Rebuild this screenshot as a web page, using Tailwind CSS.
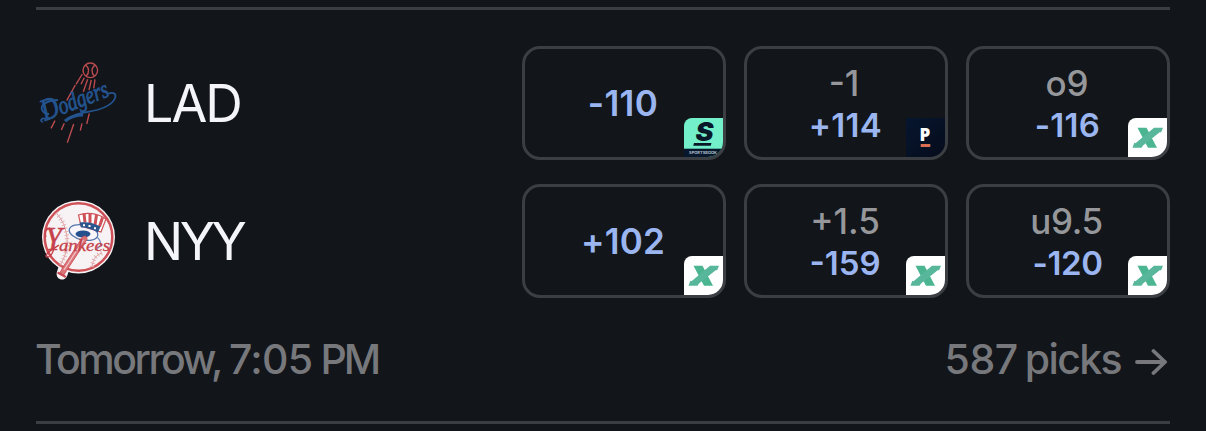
<!DOCTYPE html>
<html lang="en">
<head>
  <meta charset="UTF-8" />
  <title>LAD @ NYY</title>
  <script src="https://cdn.jsdelivr.net/npm/@tailwindcss/browser@4"></script>
</head>
<body class="h-screen overflow-hidden bg-[#12151a] font-['Inter',sans-serif]">

<!-- shared sportsbook logo -->
<svg class="hidden">
  <symbol id="book-x" viewBox="0 0 39 39">
    <rect width="39" height="39" fill="#fff" />
    <path d="M9.500 9.700h9l10.500 20h-9z" fill="#4bb592" />
    <path d="M26 9.700h9l-2 4.800-1-.5-17 13.500-1.500 2.200H4.500l1.800-5 1.200.5z" fill="#58b69b" />
  </symbol>
</svg>

<div class="mx-9 mt-[7px] h-[417px] border-y-3 border-[#3b3e42] flex flex-col">

  <div class="mt-9 flex flex-col gap-6">

    <div class="flex items-center h-[114px]">
      <svg class="w-[84px] h-[84px] shrink-0 overflow-visible" viewBox="0 0 84 84" fill="none">
        <g stroke="#b94b4e" stroke-width="1.400">
          <circle cx="54.300" cy="9.300" r="7.300" />
          <path d="M49.300 4.100c4 2 4.300 7.500 1 11M59.300 4.100c-4 2-4.300 7.500-1 11" />
          <path d="M46.300 13l-6.300 10.300M39.300 24l-8.600 15.700M48.300 16.700l-3.300 6.600M51.700 18.300l-4.400 12.400M55.300 19l-2.300 10M59 18.300l-1.300 9M19 59.700l-4 7.600M28.300 62.300l-3 6.700M37.700 63l-6.400 18.700M46 62.300l-1.700 7.400M53.300 52.300l-2.600 10.700" />
        </g>
        <text x="9" y="60" transform="rotate(-21 9 60)" textLength="70" lengthAdjust="spacingAndGlyphs" fill="#24548f" stroke="#24548f" stroke-width=".8" class="font-['Liberation_Serif',serif] italic"><tspan class="text-[31px]">D</tspan><tspan class="text-[25px]">odgers</tspan></text>
        <path d="M10 58c-4-2-7 2-3 3M13 53c-6 0-10-6-5-10 4-3 9-4 14-4" stroke="#24548f" stroke-width="1.800" />
        <path d="M29 60c8-8 20-8 32-11 10-3 18-8 18.500-14 0-3-3-4-8-2" stroke="#24548f" stroke-width="1.800" />
        <path d="M29 60c5-4 11-6 18-6" stroke="#24548f" stroke-width="3" />
      </svg>
      <span class="ml-6 pt-px text-[52px] leading-none text-[#f4f5f9] tracking-[-2px]">LAD</span>

      <div class="ml-auto flex gap-[18px]">
        <div class="relative w-[204px] h-[114px] border-3 border-[#3b3e42] rounded-[18px] overflow-hidden flex flex-col items-center justify-center">
          <span class="pr-[2px] text-[35px] leading-[42px] font-[570] text-[#9ab5ef] tracking-[.4px]">-110</span>
          <svg class="absolute right-0 bottom-0 w-[39px] h-[39px] rounded-tl-[8px]" viewBox="0 0 39 39">
            <rect width="39" height="39" fill="#73f0c9" />
            <rect y="30.700" width="39" height="8.300" fill="#07182c" />
            <text x="11.500" y="22.800" textLength="18" lengthAdjust="spacingAndGlyphs" fill="#081829" class="text-[25.500px] font-black italic">S</text>
            <path d="M10 24.900h17.500l-.8 2.800H9.200z" fill="#081829" />
            <text x="5" y="36" textLength="28" lengthAdjust="spacingAndGlyphs" fill="#b4bfca" class="text-[3.500px] font-bold">SPORTSBOOK</text>
          </svg>
        </div>
        <div class="relative w-[204px] h-[114px] border-3 border-[#3b3e42] rounded-[18px] overflow-hidden flex flex-col items-center justify-center pt-[2px]">
          <span class="pr-[4px] text-[35px] leading-[42px] font-[450] text-[#96979a]">-1</span>
          <span class="pr-px text-[33px] leading-[42px] font-[570] text-[#9ab5ef] tracking-[.3px]">+114</span>
          <svg class="absolute right-0 bottom-0 w-[39px] h-[39px]" viewBox="0 0 39 39">
            <defs>
              <linearGradient id="navy" x1="0" y1="0" x2="1" y2="1">
                <stop offset="0" stop-color="#06162f" />
                <stop offset="1" stop-color="#060c1b" />
              </linearGradient>
            </defs>
            <rect width="39" height="39" fill="url(#navy)" />
            <text x="13.500" y="23" fill="#fff" class="font-['Open_Sans',sans-serif] text-[17px] font-extrabold">P</text>
            <rect x="14.700" y="26" width="9.600" height="3" fill="#d96f50" />
          </svg>
        </div>
        <div class="relative w-[204px] h-[114px] border-3 border-[#3b3e42] rounded-[18px] overflow-hidden flex flex-col items-center justify-center pt-[2px]">
          <span class="pr-[2px] text-[35px] leading-[42px] font-[450] text-[#96979a]">o9</span>
          <span class="pr-px text-[33px] leading-[42px] font-[570] text-[#9ab5ef] tracking-[.3px]">-116</span>
          <svg class="absolute right-0 bottom-0 w-[39px] h-[39px] rounded-tl-[8px]"><use href="#book-x" /></svg>
        </div>
      </div>
    </div>

    <div class="flex items-center h-[114px]">
      <svg class="w-[84px] h-[84px] shrink-0" viewBox="0 0 84 84" fill="none">
        <circle cx="42.500" cy="38" r="36.500" fill="#f7f3f4" />
        <path d="M28 69l-2 6" stroke="#f7f3f4" stroke-width="11" stroke-linecap="round" />
        <circle cx="42.500" cy="38" r="33.800" stroke="#cf5158" stroke-width="2.500" />
        <path d="M20 14c13 13 15 36 4 52M66 54c-6 2-9 6-10 14" stroke="#dd9da0" stroke-width="1" />
        <path d="M20 14c13 13 15 36 4 52M66 54c-6 2-9 6-10 14" stroke="#e3b2b4" stroke-width="4.500" stroke-dasharray="1 2.500" />
        <!-- top hat -->
        <ellipse cx="47.500" cy="33.500" rx="14.500" ry="7.500" fill="#f8f6fa" stroke="#5577ae" stroke-width="1.300" transform="rotate(12 47.500 33.500)" />
        <path d="M61 38c6 6 4 10-2 13" stroke="#7894c0" stroke-width="1.200" />
        <ellipse cx="47" cy="35" rx="7.500" ry="3.500" fill="#24508d" />
        <path d="M42.500 16c8-3 19-2 27.500 4l-5 13-20-6z" fill="#fff" stroke="#cf5158" stroke-width="1.200" />
        <path d="M48 14.500l1 9M54 14v10M60.500 16l-1.500 10M66.500 18.500l-3 9" stroke="#cf5158" stroke-width="3" />
        <path d="M43.500 23.500c7-1 14 0 21 4l-2.500 6c-5-3-11-5-17-5z" fill="#2d568f" />
        <path d="M47 26.300h2M52.500 27h2M58 29.300h2" stroke="#fff" stroke-width="2" />
        <!-- bat -->
        <path d="M46.500 38c2.500-2 5-.5 4.500 2.500L31 71l-3.500 5.500-4-2L27 68z" fill="#db7479" stroke="#c94c54" stroke-width=".8" />
        <path d="M47.500 41L28 71" stroke="#f4c8ca" stroke-width="1.200" />
        <path d="M22.500 74l6.500 3.500" stroke="#c94c54" stroke-width="2.500" stroke-linecap="round" />
        <text x="9" y="51" textLength="17" lengthAdjust="spacingAndGlyphs" fill="#c6414b" stroke="#c6414b" stroke-width=".5" class="font-['Liberation_Serif',serif] italic text-[33px]">Y</text>
        <path d="M18 48c-1 9-7 12-8 9 0-3 5-6 13-11M10 38c-2-5 0-8 4-9" stroke="#c6414b" stroke-width="1.400" />
        <text x="23" y="51.500" textLength="51" lengthAdjust="spacingAndGlyphs" fill="#c6414b" stroke="#c6414b" stroke-width=".3" class="font-['Liberation_Serif',serif] italic text-[17.500px]">ankees</text>
      </svg>
      <span class="ml-6 pt-px text-[52px] leading-none text-[#f4f5f9] tracking-[-3.500px]">NYY</span>

      <div class="ml-auto flex gap-[18px]">
        <div class="relative w-[204px] h-[114px] border-3 border-[#3b3e42] rounded-[18px] overflow-hidden flex flex-col items-center justify-center">
          <span class="pr-[2px] text-[35px] leading-[42px] font-[570] text-[#9ab5ef] tracking-[.2px]">+102</span>
          <svg class="absolute right-0 bottom-0 w-[39px] h-[39px] rounded-tl-[8px]"><use href="#book-x" /></svg>
        </div>
        <div class="relative w-[204px] h-[114px] border-3 border-[#3b3e42] rounded-[18px] overflow-hidden flex flex-col items-center justify-center pt-[2px]">
          <span class="pr-[2px] text-[35px] leading-[42px] font-[450] text-[#96979a]">+1.5</span>
          <span class="pr-[2px] text-[33px] leading-[42px] font-[570] text-[#9ab5ef]">-159</span>
          <svg class="absolute right-0 bottom-0 w-[39px] h-[39px] rounded-tl-[8px]"><use href="#book-x" /></svg>
        </div>
        <div class="relative w-[204px] h-[114px] border-3 border-[#3b3e42] rounded-[18px] overflow-hidden flex flex-col items-center justify-center pt-[2px]">
          <span class="pr-[3px] text-[35px] leading-[42px] font-[450] text-[#96979a] tracking-[-.4px]">u9.5</span>
          <span class="pr-px text-[33px] leading-[42px] font-[570] text-[#9ab5ef] tracking-[-.4px]">-120</span>
          <svg class="absolute right-0 bottom-0 w-[39px] h-[39px] rounded-tl-[8px]"><use href="#book-x" /></svg>
        </div>
      </div>
    </div>

  </div>

  <div class="mt-9 flex items-center justify-between h-[50px] text-[41px] leading-none font-[480] text-[#77787c]">
    <div class="flex gap-[8px]">
      <span class="-ml-px tracking-[-2.500px]">Tomorrow,</span>
      <span class="tracking-[-.700px]">7:05</span>
      <span class="tracking-[-3px]">PM</span>
    </div>
    <div class="flex items-center">
      <span class="tracking-[-.500px]">587</span>
      <span class="ml-[7px] tracking-[-1.600px]">picks</span>
      <svg class="mt-[5px] ml-[14px] mr-[3px] w-[32px] h-[28px]" viewBox="0 0 32 28" fill="none" stroke="#77787c" stroke-width="3.800" stroke-linecap="round" stroke-linejoin="round">
        <path d="M2 14h28M18.500 3l11.500 11-11.500 11" />
      </svg>
    </div>
  </div>

</div>

</body>
</html>
